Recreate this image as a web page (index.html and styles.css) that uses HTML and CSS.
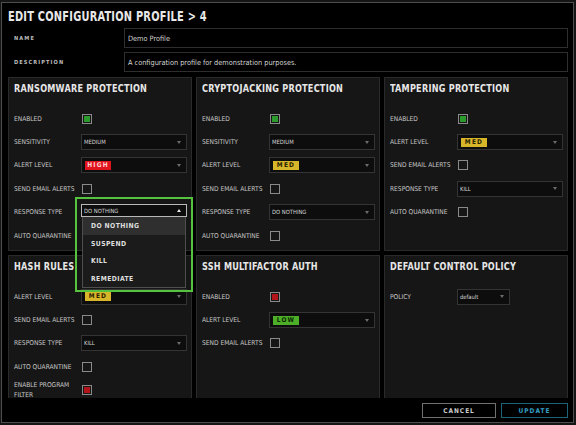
FILE: index.html
```html
<!DOCTYPE html>
<html>
<head>
<meta charset="utf-8">
<link rel="stylesheet" href="styles.css">
</head>
<body>
<div class="modal">
  <header class="modal-head"><h1 class="modal-title">EDIT CONFIGURATION PROFILE &gt; 4</h1></header>
  <div class="fields">
    <div class="field-label">NAME</div><div class="field-input">Demo Profile</div>
    <div class="field-label">DESCRIPTION</div><div class="field-input">A configuration profile for demonstration purposes.</div>
  </div>
  <div class="scroll">
    <div class="panels">
      <section class="panel">
        <h2 class="panel-title">RANSOMWARE PROTECTION</h2>
        <div class="row"><span class="label">ENABLED</span><div class="ctrl"><span class="check on"></span></div></div>
        <div class="row"><span class="label">SENSITIVITY</span><div class="ctrl"><div class="select">MEDIUM<span class="caret"></span></div></div></div>
        <div class="row"><span class="label">ALERT LEVEL</span><div class="ctrl"><div class="select"><span class="badge high">HIGH</span><span class="caret"></span></div></div></div>
        <div class="row"><span class="label">SEND EMAIL ALERTS</span><div class="ctrl"><span class="check"></span></div></div>
        <div class="row"><span class="label">RESPONSE TYPE</span>
          <div class="ctrl dd">
            <div class="dd-head">DO NOTHING<span class="caret up"></span></div>
            <ul class="dd-list">
              <li class="active">DO NOTHING</li>
              <li>SUSPEND</li>
              <li>KILL</li>
              <li>REMEDIATE</li>
            </ul>
            <div class="dd-frame"></div>
          </div>
        </div>
        <div class="row"><span class="label">AUTO QUARANTINE</span><div class="ctrl"><span class="check"></span></div></div>
      </section>

      <section class="panel">
        <h2 class="panel-title">CRYPTOJACKING PROTECTION</h2>
        <div class="row"><span class="label">ENABLED</span><div class="ctrl"><span class="check on"></span></div></div>
        <div class="row"><span class="label">SENSITIVITY</span><div class="ctrl"><div class="select">MEDIUM<span class="caret"></span></div></div></div>
        <div class="row"><span class="label">ALERT LEVEL</span><div class="ctrl"><div class="select"><span class="badge med">MED</span><span class="caret"></span></div></div></div>
        <div class="row"><span class="label">SEND EMAIL ALERTS</span><div class="ctrl"><span class="check"></span></div></div>
        <div class="row"><span class="label">RESPONSE TYPE</span><div class="ctrl"><div class="select">DO NOTHING<span class="caret"></span></div></div></div>
        <div class="row"><span class="label">AUTO QUARANTINE</span><div class="ctrl"><span class="check"></span></div></div>
      </section>

      <section class="panel">
        <h2 class="panel-title">TAMPERING PROTECTION</h2>
        <div class="row"><span class="label">ENABLED</span><div class="ctrl"><span class="check on"></span></div></div>
        <div class="row"><span class="label">ALERT LEVEL</span><div class="ctrl"><div class="select"><span class="badge med">MED</span><span class="caret"></span></div></div></div>
        <div class="row"><span class="label">SEND EMAIL ALERTS</span><div class="ctrl"><span class="check"></span></div></div>
        <div class="row"><span class="label">RESPONSE TYPE</span><div class="ctrl"><div class="select">KILL<span class="caret"></span></div></div></div>
        <div class="row"><span class="label">AUTO QUARANTINE</span><div class="ctrl"><span class="check"></span></div></div>
      </section>

      <section class="panel">
        <h2 class="panel-title">HASH RULES</h2>
        <div class="row"><span class="label">ALERT LEVEL</span><div class="ctrl"><div class="select"><span class="badge med">MED</span><span class="caret"></span></div></div></div>
        <div class="row"><span class="label">SEND EMAIL ALERTS</span><div class="ctrl"><span class="check"></span></div></div>
        <div class="row"><span class="label">RESPONSE TYPE</span><div class="ctrl"><div class="select">KILL<span class="caret"></span></div></div></div>
        <div class="row"><span class="label">AUTO QUARANTINE</span><div class="ctrl"><span class="check"></span></div></div>
        <div class="row"><span class="label">ENABLE PROGRAM FILTER</span><div class="ctrl"><span class="check off"></span></div></div>
      </section>

      <section class="panel">
        <h2 class="panel-title">SSH MULTIFACTOR AUTH</h2>
        <div class="row"><span class="label">ENABLED</span><div class="ctrl"><span class="check off"></span></div></div>
        <div class="row"><span class="label">ALERT LEVEL</span><div class="ctrl"><div class="select"><span class="badge low">LOW</span><span class="caret"></span></div></div></div>
        <div class="row"><span class="label">SEND EMAIL ALERTS</span><div class="ctrl"><span class="check"></span></div></div>
      </section>

      <section class="panel">
        <h2 class="panel-title">DEFAULT CONTROL POLICY</h2>
        <div class="row"><span class="label">POLICY</span><div class="ctrl"><div class="select small">default<span class="caret"></span></div></div></div>
      </section>
    </div>
  </div>
  <footer class="foot">
    <button class="btn cancel">CANCEL</button>
    <button class="btn update">UPDATE</button>
  </footer>
</div>
</body>
</html>
```

FILE: styles.css
```css
* { box-sizing: border-box; }

body {
  margin: 0;
  background: #151515;
  font-family: "Liberation Sans Narrow", "DejaVu Sans Condensed", "Liberation Sans", sans-serif;
}

.modal {
  margin: 2px 0 0 1px;
  width: 573px;
  height: 421px;
  border: 1px solid #4e4e4e;
  background: #000;
  padding: 0 5px 0 6px;
  display: flex;
  flex-direction: column;
}

.modal-head {
  padding-top: 5px;
  height: 21px;
}

.modal-title {
  margin: 0;
  font-size: 14px;
  line-height: 16px;
  font-weight: bold;
  color: #e8e8e8;
  letter-spacing: 0.3px;
  white-space: nowrap;
  transform: scaleX(0.78);
  transform-origin: left center;
}

.fields {
  margin-top: 4px;
  display: grid;
  grid-template-columns: 116px 1fr;
  grid-auto-rows: 20px;
  row-gap: 4px;
}

.field-label {
  padding-left: 6px;
  display: flex;
  align-items: center;
  font-size: 5.6px;
  font-weight: bold;
  letter-spacing: 1.1px;
  color: #bdbdbd;
}

.field-input {
  border: 1px solid #2e2e2e;
  background: #000;
  padding-left: 3px;
  display: flex;
  align-items: center;
  font-size: 7.3px;
  color: #d4d4d4;
}

.scroll {
  margin-top: 5px;
  flex: 1;
  min-height: 0;
  overflow: hidden;
}

.panels {
  display: grid;
  grid-template-columns: repeat(3, 184px);
  grid-template-rows: 174px 174px;
  gap: 4px;
}

.panel {
  background: #161616;
  border: 1px solid #2a2a2a;
  padding: 4px 4px 0 5px;
}

.panel-title {
  margin: 0 0 11px;
  font-size: 11px;
  line-height: 14px;
  font-weight: bold;
  color: #e6e6e6;
  letter-spacing: 0.3px;
  white-space: nowrap;
  transform: scaleX(0.82);
  transform-origin: left center;
}

.row {
  display: flex;
  align-items: center;
  height: 23.4px;
}

.label {
  width: 67px;
  flex: none;
  padding-right: 3px;
  font-size: 6.6px;
  line-height: 10px;
  color: #c6c6c6;
}

.ctrl {
  flex: 1;
  min-width: 0;
}

.select {
  height: 16px;
  border: 1px solid #343434;
  background: #0d0d0d;
  display: flex;
  align-items: center;
  padding: 0 5px 0 2px;
  font-size: 5.8px;
  color: #d6d6d6;
}

.select.small { width: 53px; }

.caret {
  margin-left: auto;
  width: 0;
  height: 0;
  border-left: 2.5px solid transparent;
  border-right: 2.5px solid transparent;
  border-top: 3px solid #6c6c6c;
}

.caret.up {
  border-top: none;
  border-bottom: 3px solid #e6e6e6;
}

.check {
  display: block;
  width: 10px;
  height: 10px;
  margin-left: 1px;
  border: 1px solid #8a8a8a;
  padding: 1px;
  background-clip: content-box;
}

.check.on { background-color: #2b9b2b; }
.check.off { background-color: #b3141a; }

.badge {
  display: block;
  width: 26px;
  height: 9px;
  margin-left: 1px;
  font-size: 6.5px;
  line-height: 9px;
  font-weight: bold;
  letter-spacing: 1.2px;
  text-align: center;
}

.badge.high { background: #e0141e; color: #ffd4d4; }
.badge.med { background: #d8b62a; color: #2a2200; }
.badge.low { background: #4daf28; color: #0c2604; }

/* open dropdown */
.dd {
  position: relative;
  height: 16px;
}

.dd-head {
  height: 13px;
  border: 1px solid #b8b8b8;
  background: #0d0d0d;
  display: flex;
  align-items: center;
  padding: 0 5px 0 2px;
  font-size: 5.8px;
  color: #d8d8d8;
  position: relative;
  z-index: 6;
}

.dd-list {
  position: absolute;
  z-index: 6;
  top: 13px;
  left: 1px;
  right: 1px;
  margin: 0;
  padding: 0;
  list-style: none;
  background: #1b1b1b;
  border: 1px solid #4e4e4e;
  border-top: none;
}

.dd-list li {
  height: 17.5px;
  display: flex;
  align-items: center;
  padding-left: 8px;
  font-size: 6.8px;
  font-weight: bold;
  letter-spacing: 0.4px;
  color: #dedede;
}

.dd-list li.active { background: #2f2f2f; }

.dd-frame {
  position: absolute;
  z-index: 7;
  left: -6px;
  top: -7px;
  width: 118px;
  height: 95px;
  border: 2px solid #56c33f;
  pointer-events: none;
}

.foot {
  height: 24px;
  flex: none;
  display: flex;
  justify-content: flex-end;
  align-items: flex-start;
  gap: 5px;
  padding-top: 5px;
}

.btn {
  height: 15px;
  padding: 0;
  background: #000;
  font-family: inherit;
  font-size: 6.5px;
  font-weight: bold;
  letter-spacing: 1px;
  cursor: pointer;
}

.btn.cancel {
  width: 74px;
  border: 1px solid #707070;
  color: #cacaca;
}

.btn.update {
  width: 67px;
  border: 1px solid #1c6279;
  color: #33a0c6;
}
```
